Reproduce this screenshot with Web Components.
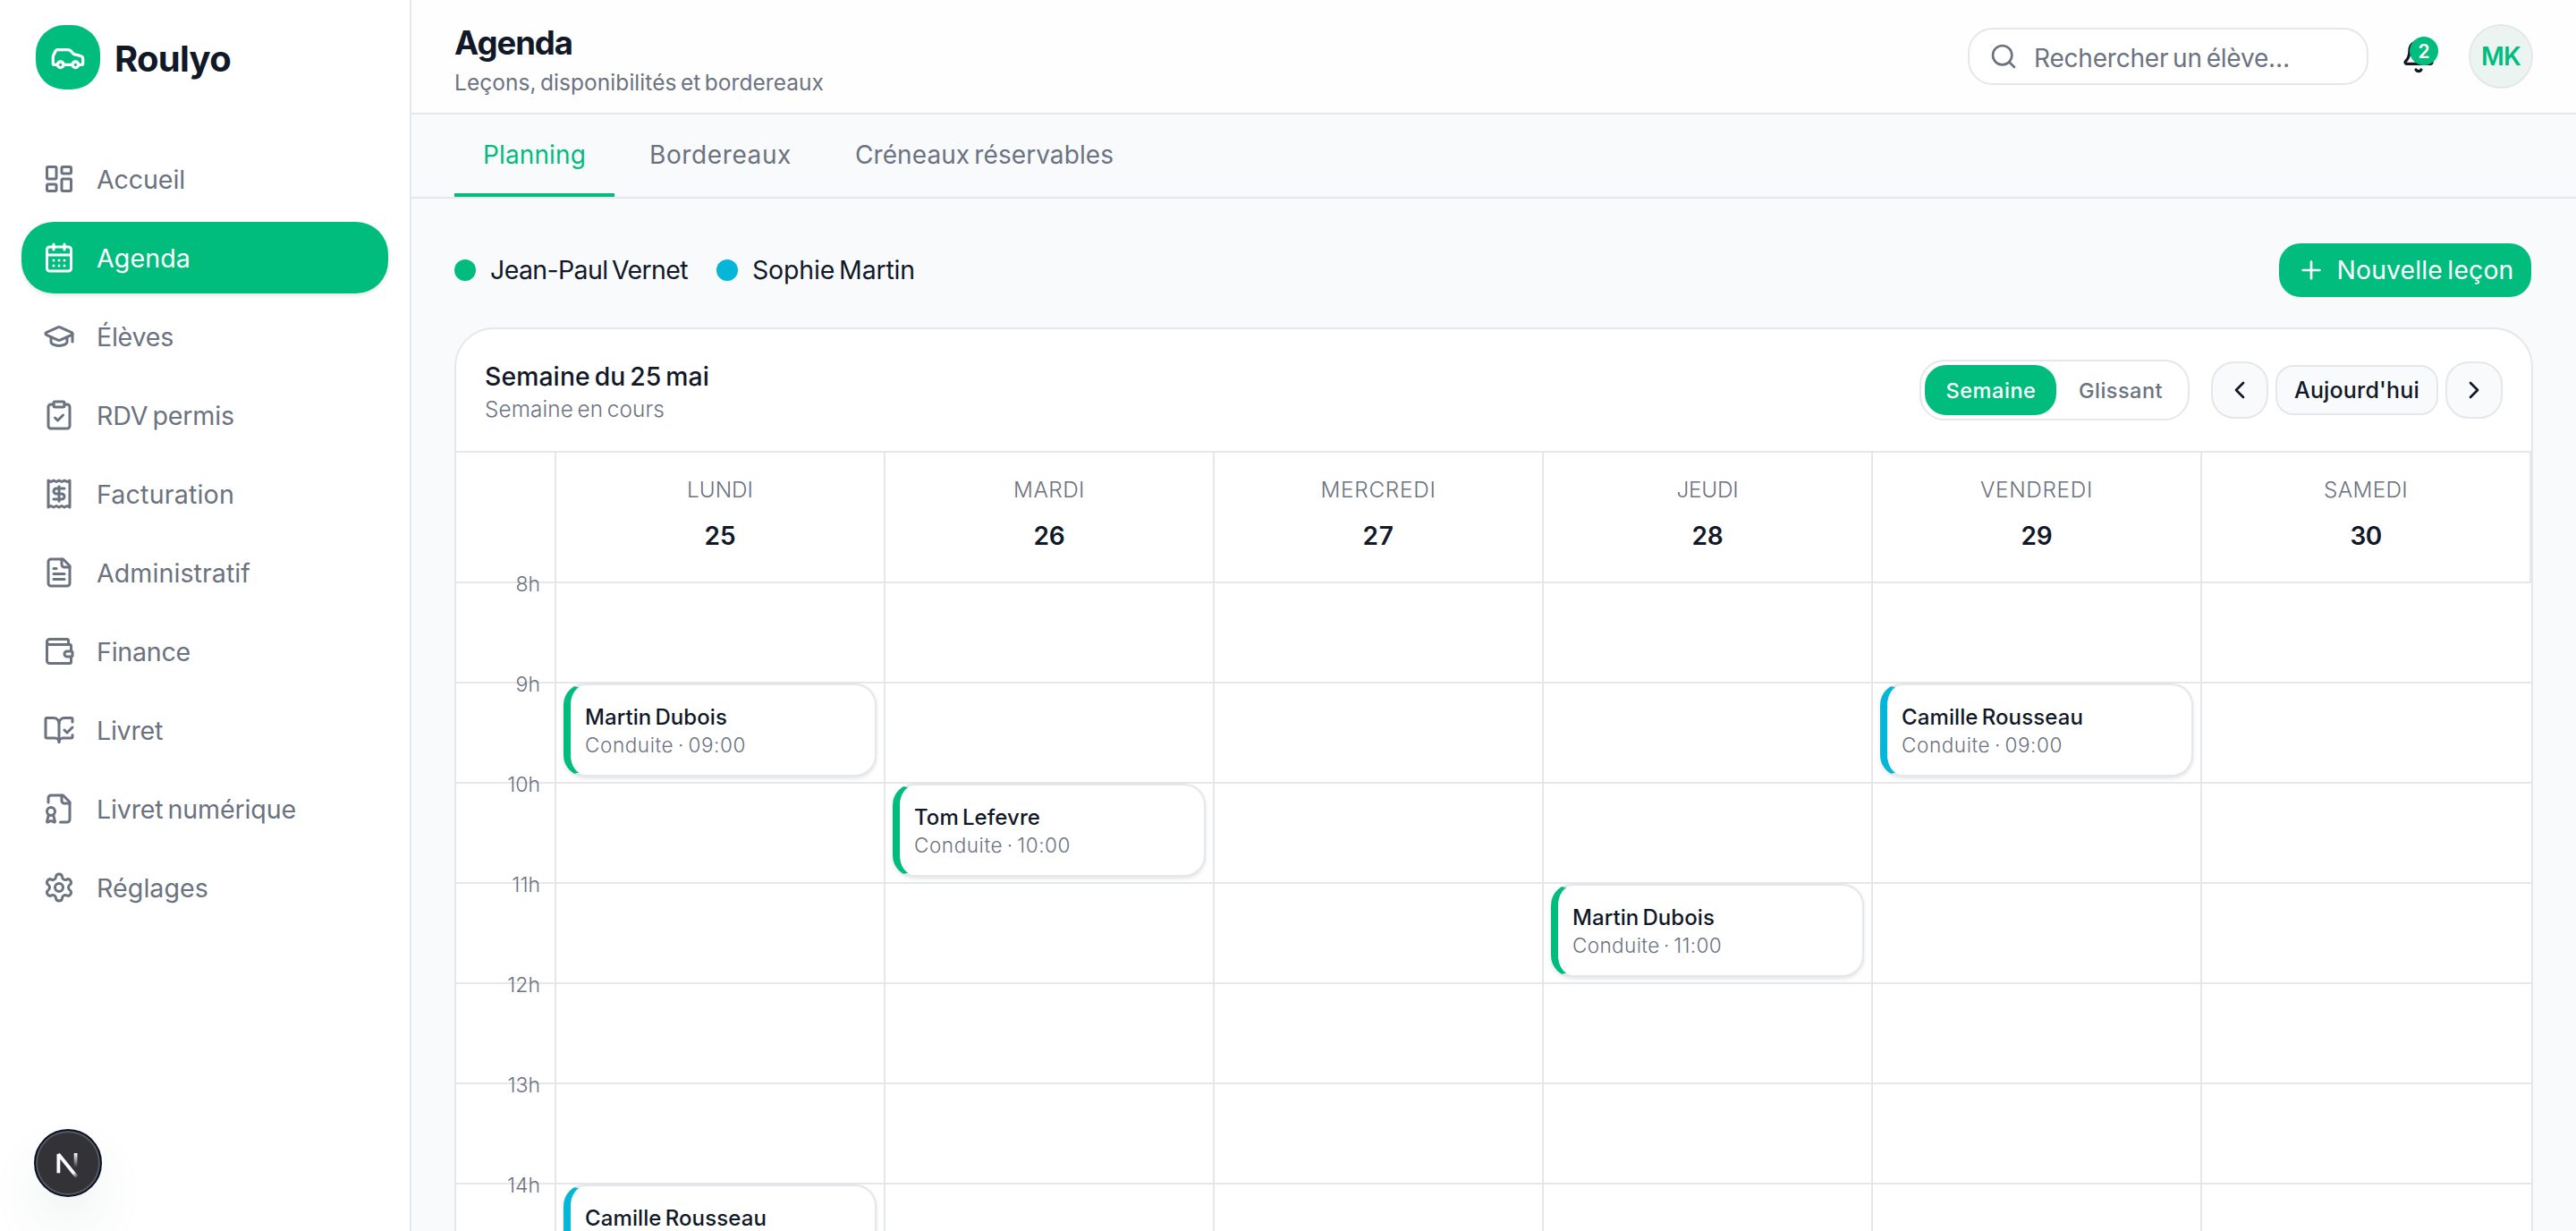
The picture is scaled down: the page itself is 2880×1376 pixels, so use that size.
<!DOCTYPE html>
<html lang="fr">
<head>
<meta charset="utf-8">
<title>Roulyo - Agenda</title>
<style>
  :root {
    --green: #00bc7d;
    --cyan: #06b6d9;
    --ink: #111827;
    --muted: #6b7280;
    --line: #e5e7eb;
    --soft: #f9fafc;
  }
  body {
    margin: 0;
    width: 2880px;
    height: 1376px;
    overflow: hidden;
    background: var(--soft);
    color: var(--ink);
    font-family: Inter, "Liberation Sans", sans-serif;
    font-size: 28px;
    line-height: 1;
  }
</style>
</head>
<body>
<agenda-app></agenda-app>

<script>
const icons = {
  car: '<path d="M19 17h2c.6 0 1-.4 1-1v-3c0-.9-.7-1.7-1.5-1.9C18.7 10.6 16 10 16 10s-1.3-1.4-2.2-2.3c-.5-.4-1.1-.7-1.8-.7H5c-.6 0-1.1.4-1.4.9l-1.4 2.9A3.7 3.7 0 0 0 2 12v4c0 .6.4 1 1 1h2"/><circle cx="7" cy="17" r="2"/><path d="M9 17h6"/><circle cx="17" cy="17" r="2"/>',
  dashboard: '<rect width="7" height="9" x="3" y="3" rx="1"/><rect width="7" height="5" x="14" y="3" rx="1"/><rect width="7" height="9" x="14" y="12" rx="1"/><rect width="7" height="5" x="3" y="16" rx="1"/>',
  calendar: '<path d="M8 2v4"/><path d="M16 2v4"/><rect width="18" height="18" x="3" y="4" rx="2"/><path d="M3 10h18"/><path d="M8 14h.01"/><path d="M12 14h.01"/><path d="M16 14h.01"/><path d="M8 18h.01"/><path d="M12 18h.01"/><path d="M16 18h.01"/>',
  cap: '<path d="M21.42 10.922a1 1 0 0 0-.019-1.838L12.83 5.18a2 2 0 0 0-1.66 0L2.6 9.08a1 1 0 0 0 0 1.832l8.57 3.908a2 2 0 0 0 1.66 0z"/><path d="M22 10v6"/><path d="M6 12.5V16a6 3 0 0 0 12 0v-3.5"/>',
  clipboard: '<rect width="8" height="4" x="8" y="2" rx="1"/><path d="M16 4h2a2 2 0 0 1 2 2v14a2 2 0 0 1-2 2H6a2 2 0 0 1-2-2V6a2 2 0 0 1 2-2h2"/><path d="m9 14 2 2 4-4"/>',
  receipt: '<path d="M4 2v20l2-1 2 1 2-1 2 1 2-1 2 1 2-1 2 1V2l-2 1-2-1-2 1-2-1-2 1-2-1-2 1Z"/><path d="M16 8h-6a2 2 0 1 0 0 4h4a2 2 0 1 1 0 4H8"/><path d="M12 17.5v-11"/>',
  file: '<path d="M15 2H6a2 2 0 0 0-2 2v16a2 2 0 0 0 2 2h12a2 2 0 0 0 2-2V7Z"/><path d="M14 2v4a2 2 0 0 0 2 2h4"/><path d="M10 9H8"/><path d="M16 13H8"/><path d="M16 17H8"/>',
  wallet: '<path d="M19 7V4a1 1 0 0 0-1-1H5a2 2 0 0 0 0 4h15a1 1 0 0 1 1 1v4h-3a2 2 0 0 0 0 4h3a1 1 0 0 0 1-1v-2a1 1 0 0 0-1-1"/><path d="M3 5v14a2 2 0 0 0 2 2h15a1 1 0 0 0 1-1v-4"/>',
  book: '<path d="M12 21V7"/><path d="m16 12 2 2 4-4"/><path d="M22 6V4a1 1 0 0 0-1-1h-5a4 4 0 0 0-4 4 4 4 0 0 0-4-4H3a1 1 0 0 0-1 1v13a1 1 0 0 0 1 1h6a3 3 0 0 1 3 3 3 3 0 0 1 3-3h6a1 1 0 0 0 1-1v-1.3"/>',
  badge: '<path d="M13 22h5a2 2 0 0 0 2-2V7l-5-5H6a2 2 0 0 0-2 2v3.3"/><path d="M14 2v4a2 2 0 0 0 2 2h4"/><path d="m7.69 16.479 1.29 4.88a.5.5 0 0 1-.698.591l-1.843-.849a1 1 0 0 0-.879.001l-1.846.85a.5.5 0 0 1-.692-.593l1.29-4.88"/><circle cx="6" cy="14" r="3"/>',
  gear: '<path d="M9.671 4.136a2.34 2.34 0 0 1 4.659 0 2.34 2.34 0 0 0 3.319 1.915 2.34 2.34 0 0 1 2.33 4.033 2.34 2.34 0 0 0 0 3.831 2.34 2.34 0 0 1-2.33 4.033 2.34 2.34 0 0 0-3.319 1.915 2.34 2.34 0 0 1-4.659 0 2.34 2.34 0 0 0-3.32-1.915 2.34 2.34 0 0 1-2.33-4.033 2.34 2.34 0 0 0 0-3.831A2.34 2.34 0 0 1 6.35 6.051a2.34 2.34 0 0 0 3.319-1.915"/><circle cx="12" cy="12" r="3"/>',
  search: '<path d="m21 21-4.34-4.34"/><circle cx="11" cy="11" r="8"/>',
  bell: '<path d="M10.268 21a2 2 0 0 0 3.464 0"/><path d="M3.262 15.326A1 1 0 0 0 4 17h16a1 1 0 0 0 .74-1.673C19.41 13.956 18 12.499 18 8A6 6 0 0 0 6 8c0 4.499-1.411 5.956-2.738 7.326"/>',
  plus: '<path d="M5 12h14"/><path d="M12 5v14"/>',
  left: '<path d="m15 18-6-6 6-6"/>',
  right: '<path d="m9 18 6-6-6-6"/>'
};

class BaseElement extends HTMLElement {
  constructor() {
    super();
    this.attachShadow({ mode: "open" });
  }
  connectedCallback() {
    this.shadowRoot.innerHTML = this.html();
  }
  attr(name, fallback = "") {
    return this.getAttribute(name) ?? fallback;
  }
}

class UiIcon extends BaseElement {
  html() {
    const size = this.attr("size", "36");
    return `
    <style>
      :host { display: block; flex: none; width: ${size}px; height: ${size}px; }
      svg { display: block; width: 100%; height: 100%; }
    </style>
    <svg viewBox="0 0 24 24" fill="none" stroke="currentColor" stroke-width="${this.attr("stroke", "2")}" stroke-linecap="round" stroke-linejoin="round">${icons[this.attr("name")]}</svg>`;
  }
}

// one line of text, tracked so that it takes the given width
class UiText extends BaseElement {
  html() {
    return `
    <style>
      :host { display: block; flex: none; width: max-content; white-space: nowrap; }
      span { display: inline-block; word-spacing: -0.1em; }
    </style>
    <span>${this.attr("text")}</span>`;
  }
  connectedCallback() {
    super.connectedCallback();
    const target = Number(this.attr("w", "0"));
    if (!target) return;
    const span = this.shadowRoot.querySelector("span");
    const gap = (target - span.getBoundingClientRect().width) / this.attr("text").length;
    span.style.letterSpacing = gap.toFixed(3) + "px";
  }
}

class NavItem extends BaseElement {
  html() {
    return `
    <style>
      :host {
        display: flex;
        align-items: center;
        gap: 24px;
        height: 80px;
        padding: 0 24px;
        border-radius: 36px;
        color: var(--muted);
        font-size: 28.6px;
        font-weight: 400;
      }
      :host([active]) {
        background: var(--green);
        color: #fff;
        box-shadow: 0 2px 4px rgba(17, 24, 39, .12);
      }
      ui-text { padding-top: 2px; }
    </style>
    <ui-icon name="${this.attr("icon")}"></ui-icon>
    <ui-text text="${this.attr("label")}" w="${this.attr("w")}"></ui-text>`;
  }
}

class DevBadge extends BaseElement {
  html() {
    return `
    <style>
      :host {
        display: block;
        box-sizing: border-box;
        width: 76px;
        height: 76px;
        border-radius: 50%;
        border: 2px solid #0b1224;
        background: #323237;
        box-shadow: inset 0 0 0 2px #535961, 0 32px 64px -8px rgba(40, 80, 90, .12);
      }
      svg { display: block; margin: -2px; }
    </style>
    <svg width="76" height="76" viewBox="0 0 76 76" fill="none" stroke-width="3.8">
      <defs>
        <linearGradient id="a" gradientUnits="userSpaceOnUse" x1="38" y1="40" x2="48.5" y2="54"><stop stop-color="#fff"/><stop offset=".6" stop-color="#fff"/><stop offset="1" stop-color="#fff" stop-opacity="0"/></linearGradient>
        <linearGradient id="b" gradientUnits="userSpaceOnUse" x1="46" y1="27" x2="46" y2="43"><stop stop-color="#fff"/><stop offset="1" stop-color="#fff" stop-opacity="0"/></linearGradient>
      </defs>
      <path d="M49.2 55.2 27.4 28.2V49.2" stroke="url(#a)" stroke-linejoin="bevel"/>
      <path d="M46.6 27v22" stroke="url(#b)"/>
    </svg>`;
  }
}

class SideBar extends BaseElement {
  html() {
    return `
    <style>
      :host {
        display: flex;
        flex-direction: column;
        box-sizing: border-box;
        width: 460px;
        padding: 28px 24px 38px;
        border-right: 2px solid var(--line);
        background: #fff;
      }
      .brand { display: flex; align-items: center; gap: 16px; padding-left: 16px; font-size: 40px; font-weight: 700; }
      .brand ui-text { padding-top: 3px; }
      .logo { display: grid; place-items: center; width: 72px; height: 72px; border-radius: 32px; background: var(--green); color: #fff; }
      nav { display: flex; flex-direction: column; gap: 8px; padding-top: 60px; flex: 1; }
      dev-badge { margin-left: 14px; }
    </style>
    <div class="brand">
      <div class="logo"><ui-icon name="car" size="40"></ui-icon></div>
      <ui-text text="Roulyo" w="130"></ui-text>
    </div>
    <nav>
      <nav-item icon="dashboard" label="Accueil" w="99"></nav-item>
      <nav-item icon="calendar" label="Agenda" w="105" active></nav-item>
      <nav-item icon="cap" label="Élèves" w="86"></nav-item>
      <nav-item icon="clipboard" label="RDV permis" w="154"></nav-item>
      <nav-item icon="receipt" label="Facturation" w="154"></nav-item>
      <nav-item icon="file" label="Administratif" w="172"></nav-item>
      <nav-item icon="wallet" label="Finance" w="105"></nav-item>
      <nav-item icon="book" label="Livret" w="74"></nav-item>
      <nav-item icon="badge" label="Livret numérique" w="223"></nav-item>
      <nav-item icon="gear" label="Réglages" w="125"></nav-item>
    </nav>
    <dev-badge></dev-badge>`;
  }
}

class TopBar extends BaseElement {
  html() {
    return `
    <style>
      :host {
        display: flex;
        flex: none;
        align-items: center;
        box-sizing: border-box;
        height: 128px;
        padding: 0 48px;
        border-bottom: 2px solid var(--line);
        background: #fefefe;
      }
      .titles { flex: 1; padding-top: 5px; }
      h1 { margin: 0 0 9px; font-size: 36.5px; font-weight: 700; line-height: 44px; }
      .sub { color: var(--muted); font-size: 24.5px; line-height: 26px; }
      .search {
        display: flex;
        align-items: center;
        gap: 18px;
        box-sizing: border-box;
        width: 448px;
        height: 64px;
        padding: 0 22px;
        border: 2px solid var(--line);
        border-radius: 28px;
        background: #fff;
        color: var(--muted);
      }
      .search ui-text { padding-top: 3px; }
      .bell { position: relative; margin: 0 36px; }
      .count {
        position: absolute;
        left: 10px;
        top: -2px;
        width: 32px;
        height: 32px;
        border-radius: 50%;
        background: var(--green);
        color: #fff;
        font-size: 21px;
        font-weight: 600;
        line-height: 33px;
        text-align: center;
      }
      .avatar {
        display: grid;
        place-items: center;
        box-sizing: border-box;
        width: 72px;
        height: 72px;
        border: 2px solid var(--line);
        border-radius: 50%;
        background: #ebf4f1;
        color: var(--green);
        font-weight: 600;
      }
    </style>
    <div class="titles">
      <h1><ui-text text="Agenda" w="132"></ui-text></h1>
      <div class="sub"><ui-text text="Leçons, disponibilités et bordereaux" w="413"></ui-text></div>
    </div>
    <div class="search">
      <ui-icon name="search" size="32"></ui-icon>
      <ui-text text="Rechercher un élève…" w="286"></ui-text>
    </div>
    <div class="bell">
      <ui-icon name="bell" size="40"></ui-icon>
      <div class="count">2</div>
    </div>
    <div class="avatar"><ui-text text="MK" w="44"></ui-text></div>`;
  }
}

class TabItem extends BaseElement {
  html() {
    return `
    <style>
      :host {
        display: block;
        box-sizing: border-box;
        height: 92px;
        padding: 30px 32px 0;
        border-bottom: 4px solid transparent;
        color: var(--muted);
        font-weight: 400;
        line-height: 30px;
      }
      :host([active]) { color: var(--green); border-color: var(--green); }
    </style>
    <ui-text text="${this.attr("label")}" w="${this.attr("w")}"></ui-text>`;
  }
}

class CoachLegend extends BaseElement {
  html() {
    return `
    <style>
      :host { display: flex; align-items: center; gap: 16px; }
      i { width: 24px; height: 24px; border-radius: 50%; background: ${this.attr("color")}; }
      ui-text { padding-top: 1px; }
    </style>
    <i></i><ui-text text="${this.attr("name")}" w="${this.attr("w")}"></ui-text>`;
  }
}

class UiButton extends BaseElement {
  html() {
    return `
    <style>
      :host {
        display: flex;
        align-items: center;
        justify-content: center;
        gap: 12px;
        box-sizing: border-box;
        height: 56px;
        border: 2px solid var(--line);
        border-radius: 20px;
        background: var(--soft);
        font-size: 25px;
        font-weight: 500;
      }
      :host([square]) { width: 64px; height: 64px; border-radius: 26px; }
      :host([primary]) {
        gap: 13px;
        height: 60px;
        padding: 0;
        border: 0;
        border-radius: 24px;
        background: var(--green);
        color: #fff;
        font-size: 28.3px;
        font-weight: 400;
      }
      ::slotted(ui-text) { padding-top: 1px; }
    </style>
    <slot></slot>`;
  }
}

class ViewSwitch extends BaseElement {
  html() {
    return `
    <style>
      :host {
        display: flex;
        box-sizing: border-box;
        width: 302px;
        height: 68px;
        padding: 4px;
        border: 2px solid var(--line);
        border-radius: 28px;
        color: var(--muted);
        font-size: 23.5px;
        font-weight: 500;
      }
      div { display: grid; place-items: center; box-sizing: border-box; width: 144px; padding: 2px 0 0 1px; border-radius: 24px; }
      .on { width: 148px; background: var(--green); color: #fff; }
    </style>
    <div class="on"><ui-text text="Semaine" w="101"></ui-text></div>
    <div><ui-text text="Glissant" w="94"></ui-text></div>`;
  }
}

class DayHead extends BaseElement {
  html() {
    return `
    <style>
      :host {
        display: flex;
        flex-direction: column;
        align-items: center;
        gap: 25px;
        box-sizing: border-box;
        padding-top: 28px;
        border-right: 2px solid var(--line);
      }
      .name { color: var(--muted); font-size: 24.3px; font-weight: 350; line-height: 26px; }
      .num { font-size: 28px; font-weight: 600; line-height: 28px; }
    </style>
    <ui-text class="name" text="${this.attr("name")}" w="${this.attr("w")}"></ui-text>
    <ui-text class="num" text="${this.attr("num")}" w="35"></ui-text>`;
  }
}

class HourRow extends BaseElement {
  html() {
    const cells = [2, 3, 4, 5, 6, 7].map((col) => `<div class="cell" style="grid-column: ${col}"></div>`).join("");
    return `
    <style>
      :host {
        display: grid;
        grid-template-columns: 112px repeat(6, 1fr);
        box-sizing: border-box;
        height: 112px;
        border-bottom: 2px solid var(--line);
      }
      .cell { grid-row: 1; border-right: 2px solid var(--line); }
      .cell:last-of-type { border-right: 0; }
      .hour {
        display: flex;
        grid-column: 1;
        justify-content: flex-end;
        padding-right: 16px;
        color: var(--muted);
        font-size: 23px;
        font-weight: 350;
        line-height: 24px;
      }
      .hour span { margin-top: -11px; }
    </style>
    <div class="cell hour"><span>${this.attr("label")}</span></div>
    ${cells}
    <slot></slot>`;
  }
}

class LessonCard extends BaseElement {
  html() {
    const info = this.hasAttribute("time")
      ? `<ui-text class="info" text="Conduite · ${this.attr("time")}" w="${this.attr("iw")}"></ui-text>`
      : "";
    return `
    <style>
      :host {
        display: block;
        grid-row: 1;
        grid-column: ${Number(this.attr("day")) + 1};
        box-sizing: border-box;
        height: 104px;
        margin: 0 10px 0 8px;
        padding: 22px 16px 0;
        border: 2px solid var(--line);
        border-left: 8px solid ${this.attr("color", "var(--green)")};
        border-radius: 24px;
        background: #fff;
        box-shadow: 0 2px 4px rgba(17, 24, 39, .12);
      }
      .name { font-size: 24px; font-weight: 550; line-height: 28px; }
      .info { margin-top: 4px; color: var(--muted); font-size: 22.5px; font-weight: 350; line-height: 26px; }
    </style>
    <ui-text class="name" text="${this.attr("name")}" w="${this.attr("w")}"></ui-text>
    ${info}`;
  }
}

class WeekCalendar extends BaseElement {
  html() {
    return `
    <style>
      :host {
        display: block;
        box-sizing: border-box;
        height: 1400px;
        border: 2px solid var(--line);
        border-radius: 44px;
        background: #fff;
      }
      header {
        display: flex;
        align-items: center;
        box-sizing: border-box;
        height: 138px;
        padding: 0 32px;
        border-bottom: 2px solid var(--line);
      }
      .title { flex: 1; padding-top: 3px; }
      .week { font-size: 28.3px; font-weight: 550; line-height: 34px; }
      .state { margin-top: 4px; color: var(--muted); font-size: 24.3px; font-weight: 350; line-height: 30px; }
      .pager { display: flex; align-items: center; gap: 8px; margin-left: 24px; }
      .today { width: 182px; }
      .days {
        display: grid;
        grid-template-columns: 112px repeat(6, 1fr);
        box-sizing: border-box;
        height: 146px;
        border-bottom: 2px solid var(--line);
      }
      .corner { border-right: 2px solid var(--line); }
    </style>
    <header>
      <div class="title">
        <ui-text class="week" text="Semaine du 25 mai" w="251"></ui-text>
        <ui-text class="state" text="Semaine en cours" w="201"></ui-text>
      </div>
      <view-switch></view-switch>
      <div class="pager">
        <ui-button square><ui-icon name="left" size="32"></ui-icon></ui-button>
        <ui-button class="today"><ui-text text="Aujourd'hui" w="140"></ui-text></ui-button>
        <ui-button square><ui-icon name="right" size="32"></ui-icon></ui-button>
      </div>
    </header>
    <div class="days">
      <div class="corner"></div>
      <day-head name="LUNDI" num="25" w="74"></day-head>
      <day-head name="MARDI" num="26" w="80"></day-head>
      <day-head name="MERCREDI" num="27" w="129"></day-head>
      <day-head name="JEUDI" num="28" w="69"></day-head>
      <day-head name="VENDREDI" num="29" w="126"></day-head>
      <day-head name="SAMEDI" num="30" w="94"></day-head>
    </div>
    <hour-row label="8h"></hour-row>
    <hour-row label="9h">
      <lesson-card day="1" name="Martin Dubois" w="159" time="09:00" iw="180"></lesson-card>
      <lesson-card day="5" name="Camille Rousseau" w="203" time="09:00" iw="180" color="var(--cyan)"></lesson-card>
    </hour-row>
    <hour-row label="10h">
      <lesson-card day="2" name="Tom Lefevre" w="141" time="10:00" iw="175"></lesson-card>
    </hour-row>
    <hour-row label="11h">
      <lesson-card day="4" name="Martin Dubois" w="159" time="11:00" iw="167"></lesson-card>
    </hour-row>
    <hour-row label="12h"></hour-row>
    <hour-row label="13h"></hour-row>
    <hour-row label="14h">
      <lesson-card day="1" name="Camille Rousseau" w="203" color="var(--cyan)"></lesson-card>
    </hour-row>`;
  }
}

class AgendaApp extends BaseElement {
  html() {
    return `
    <style>
      :host { display: grid; grid-template-columns: 460px 1fr; height: 1376px; overflow: hidden; }
      main { display: flex; flex-direction: column; min-width: 0; height: 1376px; overflow: hidden; }
      .tabs { display: flex; flex: none; gap: 7px; padding: 0 48px; border-bottom: 2px solid var(--line); }
      .content { flex: none; padding: 50px 48px 0; }
      .bar { display: flex; align-items: center; gap: 32px; height: 60px; margin-bottom: 34px; font-size: 28.5px; }
      .bar ui-button { width: 282px; margin: 0 2px 0 auto; }
    </style>
    <side-bar></side-bar>
    <main>
      <top-bar></top-bar>
      <div class="tabs">
        <tab-item label="Planning" w="115" active></tab-item>
        <tab-item label="Bordereaux" w="159"></tab-item>
        <tab-item label="Créneaux réservables" w="289"></tab-item>
      </div>
      <div class="content">
        <div class="bar">
          <coach-legend name="Jean-Paul Vernet" color="var(--green)" w="221"></coach-legend>
          <coach-legend name="Sophie Martin" color="var(--cyan)" w="182"></coach-legend>
          <ui-button primary><ui-icon name="plus" size="32"></ui-icon><ui-text text="Nouvelle leçon" w="198"></ui-text></ui-button>
        </div>
        <week-calendar></week-calendar>
      </div>
    </main>`;
  }
}

customElements.define("ui-icon", UiIcon);
customElements.define("ui-text", UiText);
customElements.define("nav-item", NavItem);
customElements.define("dev-badge", DevBadge);
customElements.define("side-bar", SideBar);
customElements.define("top-bar", TopBar);
customElements.define("tab-item", TabItem);
customElements.define("coach-legend", CoachLegend);
customElements.define("ui-button", UiButton);
customElements.define("view-switch", ViewSwitch);
customElements.define("day-head", DayHead);
customElements.define("hour-row", HourRow);
customElements.define("lesson-card", LessonCard);
customElements.define("week-calendar", WeekCalendar);
customElements.define("agenda-app", AgendaApp);
</script>
</body>
</html>
